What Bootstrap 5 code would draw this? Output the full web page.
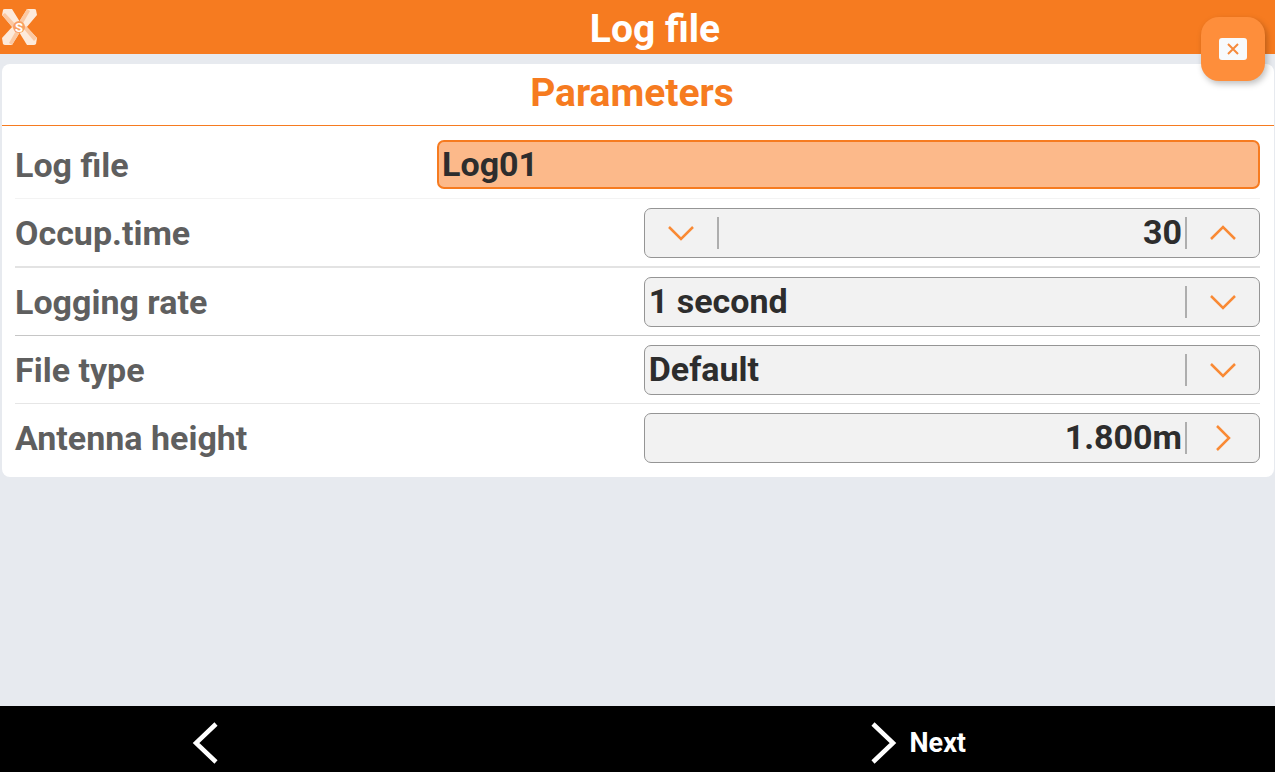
<!DOCTYPE html>
<html lang="en">
<head>
<meta charset="utf-8">
<meta name="viewport" content="width=device-width, initial-scale=1">
<title>Log file</title>
<link href="https://cdn.jsdelivr.net/npm/bootstrap@5.3.0/dist/css/bootstrap.min.css" rel="stylesheet">
<style>
  body { background: #e7eaef; font-family: Roboto, "Liberation Sans", sans-serif; font-weight: 700; }
  svg { display: block; fill: none; stroke: currentColor; }
  .app-bar { background: #f67b20; height: 54px; }
  .app-bar h1 { font-size: 39px; line-height: 59px; font-weight: 700; padding-left: 35px; }
  .app-logo { left: 2px; top: 9px; stroke: none; }
  .close-btn { top: 17px; right: 10px; width: 64px; height: 64px; border-radius: 18px; background: #fe8e3b; box-shadow: 2px 3px 6px rgba(0,0,0,.25); }
  .panel { margin: 10px 1px 0 2px; border-radius: 8px; }
  .panel h2 { color: #f67b20; border-bottom: 1px solid #f67b20; height: 62px; font-size: 39px; line-height: 58px; font-weight: 700; padding-right: 12px; }
  .panel form { padding: 5px 14px 6px 13px; }
  .param { border-top: 1px solid #f3f3f3; padding: 9px 0 8px; }
  .param:first-child { border-top: 0; }
  .param label { color: #5f5f5f; font-size: 34px; line-height: 51px; height: 50px; }
  .param:first-child label { height: 49px; }
  .rule-wide { border-top: 2px solid #e3e3e3; }
  .rule-dark { border-top-color: #c6c6c6; }
  .rule-light { border-top-color: #e6e6e6; }
  .param:first-child { padding-bottom: 9px; }
  .field { width: 49.5%; height: 50px; border: 1px solid #959595; border-radius: 7px; background: #f2f2f2; overflow: hidden; }
  .field input, .field select, .name-box { font-size: 34px; line-height: 40px; font-weight: 700; color: #2d2d2d; }
  .field input, .field select { appearance: none; border: 0; background: transparent; min-width: 0; outline: 0; padding: 0 4px 2px; }
  .field input { padding-right: 3px; }
  .name-box { width: 66.1%; height: 49px; padding: 0 3px 2px; border: 2px solid #f67b20; border-radius: 7px; background: #fcb98a; outline: 0; }
  .step { width: 72px; color: #f98a35; background: transparent; border: 0; padding: 0; }
  .bar { width: 2px; height: 32px; background: #aeaeae; }
  .nav-bar { background: #000; height: 66px; }
  .nav-bar button { background: transparent; border: 0; color: #fff; padding: 0; height: 66px; font-size: 27px; font-weight: 700; }
  .prev { margin-left: 15%; }
  .next { margin-left: 51%; gap: 12px; }
</style>
</head>
<body class="d-flex flex-column min-vh-100">
<header class="app-bar position-relative text-white text-center">
  <svg class="app-logo position-absolute" width="35" height="37" viewBox="0 0 35 37" aria-hidden="true">
    <g fill="#fdeadb">
      <path d="M1 1Q1 0 3 0H10L18 13 11 19 0 6z"/>
      <path d="M34 1Q34 0 32 0H25L17 13 24 19 35 6z"/>
      <path d="M1 35Q2 36 3 36H10L18 23 11 17 0 29z"/>
      <path d="M34 35Q33 36 32 36H25L17 23 24 17 35 29z"/>
    </g>
    <g fill="#fbc8a2">
      <path d="M0 6 3 4 15 17 11 19z"/>
      <path d="M25 0 28 2 20 16 17 13z"/>
      <path d="M10 36 7 34 15 20 18 23z"/>
      <path d="M35 29 32 32 21 19 24 17z"/>
    </g>
    <circle cx="17" cy="18" r="6" fill="#f8a063"/>
    <text x="17" y="23" text-anchor="middle" font-size="13" fill="#fff">S</text>
  </svg>
  <h1 class="m-0">Log file</h1>
  <button type="button" class="close-btn position-absolute border-0 p-0 d-flex align-items-center justify-content-center z-3" aria-label="Close">
    <svg width="28" height="22" viewBox="0 0 28 22"><rect width="28" height="22" rx="3" fill="#f8fafc" stroke="none"/><path d="M9 6 19 16M19 6 9 16" stroke="#f68a3c" stroke-width="2"/></svg>
  </button>
</header>
<main class="flex-grow-1">
  <section class="panel bg-white">
    <h2 class="m-0 text-center">Parameters</h2>
    <form>
      <div class="param d-flex justify-content-between">
        <label for="name">Log file</label>
        <input class="name-box" id="name" type="text" value="Log01">
      </div>
      <div class="param d-flex justify-content-between">
        <label for="time">Occup.time</label>
        <div class="field d-flex align-items-center">
          <button type="button" class="step d-flex justify-content-center" aria-label="Decrease"><svg width="28" height="18" viewBox="0 0 28 18"><path d="M2 3 14 15 26 3" stroke-width="2.5"/></svg></button>
          <span class="bar"></span>
          <input class="flex-fill text-end" id="time" type="text" inputmode="numeric" value="30">
          <span class="bar"></span>
          <button type="button" class="step d-flex justify-content-center" aria-label="Increase"><svg width="28" height="18" viewBox="0 0 28 18"><path d="M2 15 14 3 26 15" stroke-width="2.5"/></svg></button>
        </div>
      </div>
      <div class="param rule-wide d-flex justify-content-between">
        <label for="rate">Logging rate</label>
        <div class="field d-flex align-items-center">
          <select class="flex-fill" id="rate"><option>1 second</option></select>
          <span class="bar"></span>
          <span class="step d-flex justify-content-center"><svg width="28" height="18" viewBox="0 0 28 18"><path d="M2 3 14 15 26 3" stroke-width="2.5"/></svg></span>
        </div>
      </div>
      <div class="param rule-dark d-flex justify-content-between">
        <label for="type">File type</label>
        <div class="field d-flex align-items-center">
          <select class="flex-fill" id="type"><option>Default</option></select>
          <span class="bar"></span>
          <span class="step d-flex justify-content-center"><svg width="28" height="18" viewBox="0 0 28 18"><path d="M2 3 14 15 26 3" stroke-width="2.5"/></svg></span>
        </div>
      </div>
      <div class="param rule-light d-flex justify-content-between">
        <label for="height">Antenna height</label>
        <div class="field d-flex align-items-center">
          <input class="flex-fill text-end" id="height" type="text" value="1.800m">
          <span class="bar"></span>
          <button type="button" class="step d-flex justify-content-center" aria-label="Edit antenna height"><svg width="18" height="28" viewBox="0 0 18 28"><path d="M3 2 15 14 3 26" stroke-width="2.5"/></svg></button>
        </div>
      </div>
    </form>
  </section>
</main>
<footer class="nav-bar d-flex">
  <button type="button" class="prev d-flex align-items-center" aria-label="Back"><svg class="mt-2" width="28" height="44" viewBox="0 0 28 44"><path d="M25 3 5 22 25 41" stroke-width="4.5"/></svg></button>
  <button type="button" class="next d-flex align-items-center"><svg class="mt-2" width="28" height="44" viewBox="0 0 28 44"><path d="M3 3 23 22 3 41" stroke-width="4.5"/></svg><span class="pt-2">Next</span></button>
</footer>
<script src="https://cdn.jsdelivr.net/npm/bootstrap@5.3.0/dist/js/bootstrap.bundle.min.js"></script>
</body>
</html>
